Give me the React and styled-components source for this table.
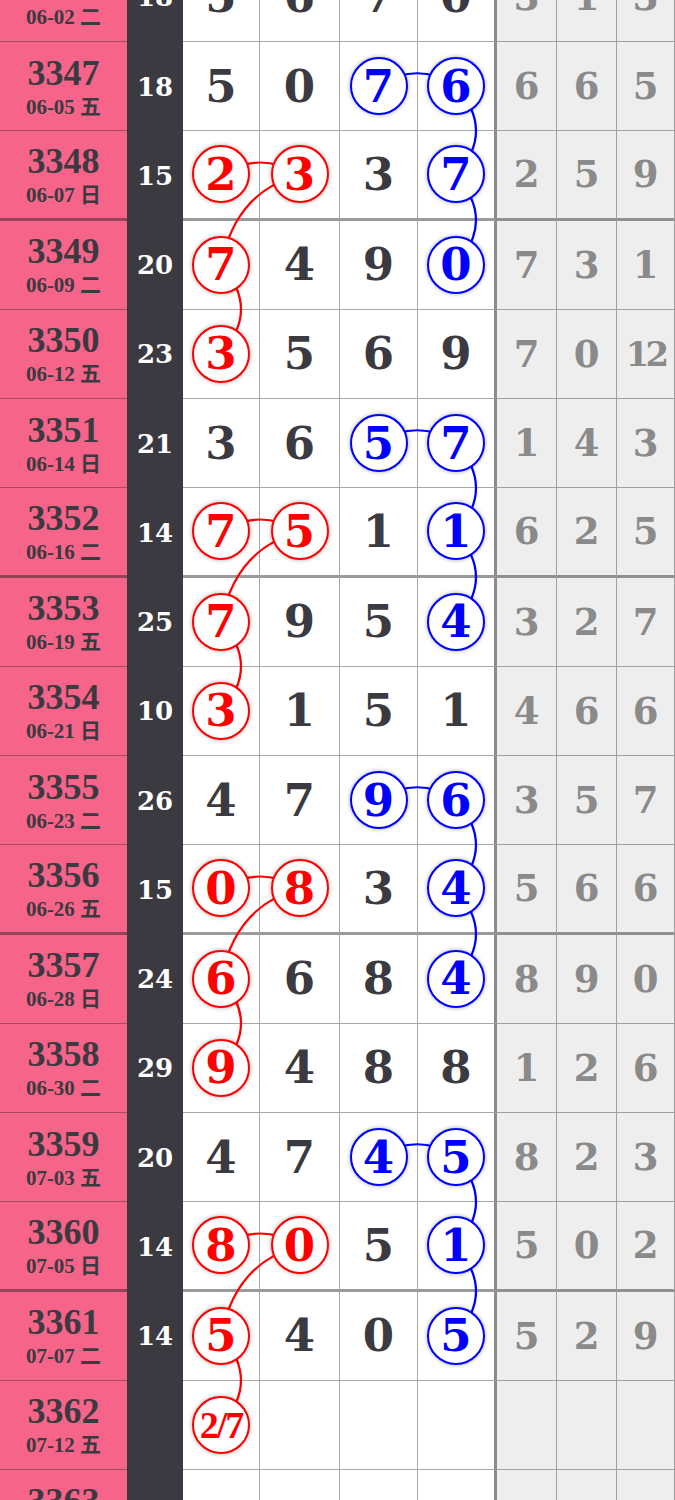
import React from 'react';
import styled, { createGlobalStyle } from 'styled-components';

const ROW_H = 89.25;
const WHITE_CX = [221, 299.5, 378.5, 456];

const GlobalStyle = createGlobalStyle`
  html, body {
    margin: 0;
    padding: 0;
    background: #ffffff;
  }
  body {
    font-family: "Liberation Serif", "Noto Sans CJK SC", serif;
    overflow: hidden;
  }
`;

const Page = styled.div`
  width: 675px;
  height: 1500px;
  overflow: hidden;
`;

const Table = styled.div`
  position: relative;
  width: 675px;
  margin-top: -47.25px;
`;

const Row = styled.div`
  display: grid;
  grid-template-columns: 127px 56px 77px 80px 78px 79px 60px 60px 58px;
  height: ${ROW_H}px;
`;

const IssueCell = styled.div`
  box-sizing: border-box;
  background: #f6648a;
  border-bottom: ${(p) => (p.$thick ? '3px solid rgba(70, 40, 50, 0.55)' : '1px solid rgba(70, 40, 50, 0.45)')};
  display: flex;
  flex-direction: column;
  align-items: center;
  justify-content: center;
  gap: 6px;
  color: #3b3a40;
  font-weight: bold;
`;

const IssueNo = styled.div`
  font-size: 36px;
  line-height: 1;
`;

const IssueDate = styled.div`
  font-size: 21px;
  line-height: 1;
`;

const SumCell = styled.div`
  background: #3a3a40;
  color: #ffffff;
  font-family: "DejaVu Serif", serif;
  font-size: 26px;
  font-weight: bold;
  display: flex;
  align-items: center;
  justify-content: center;
`;

const NumCell = styled.div`
  box-sizing: border-box;
  background: #ffffff;
  border-right: ${(p) => (p.$last ? '3px solid #8c8c8c' : '1px solid #a8a8a8')};
  border-bottom: ${(p) => (p.$thick ? '3px solid #9a9a9a' : '1px solid #a8a8a8')};
  display: flex;
  align-items: center;
  justify-content: center;
  color: #3b3a40;
  font-family: "DejaVu Serif", serif;
  font-size: 45px;
  font-weight: bold;
`;

const GrayCell = styled.div`
  box-sizing: border-box;
  background: #eeeeee;
  border-right: 1px solid #a0a0a0;
  border-bottom: ${(p) => (p.$thick ? '3px solid #909090' : '1px solid #a0a0a0')};
  display: flex;
  align-items: center;
  justify-content: center;
  color: #8a8a8a;
  font-family: "DejaVu Serif", serif;
  font-size: ${(p) => (p.$wide ? '34px' : '37px')};
  letter-spacing: ${(p) => (p.$wide ? '-4px' : '0')};
  font-weight: bold;
`;

const Ball = styled.span`
  position: relative;
  z-index: 2;
  box-sizing: border-box;
  width: 58px;
  height: 58px;
  border-radius: 50%;
  border: 2.6px solid ${(p) => p.$color};
  background: #ffffff;
  box-shadow: 0 0 4px rgba(0, 0, 0, 0.35);
  color: ${(p) => p.$color};
  display: flex;
  align-items: center;
  justify-content: center;
  font-family: ${(p) => (p.$small ? '"Liberation Serif", serif' : '"DejaVu Serif", serif')};
  font-size: ${(p) => (p.$small ? '38px' : '45px')};
  letter-spacing: ${(p) => (p.$small ? '-2px' : '0')};
  line-height: 1;
`;

const Links = styled.svg`
  position: absolute;
  left: 0;
  top: 0;
  z-index: 1;
  pointer-events: none;
`;

const COLORS = { r: '#ff0000', b: '#0000ff' };

const rows = [
  ['3346', '06-02 二', '18', ['5', '6', '7', '0'], ['3', '1', '3']],
  ['3347', '06-05 五', '18', ['5', '0', 'b7', 'b6'], ['6', '6', '5']],
  ['3348', '06-07 日', '15', ['r2', 'r3', '3', 'b7'], ['2', '5', '9']],
  ['3349', '06-09 二', '20', ['r7', '4', '9', 'b0'], ['7', '3', '1']],
  ['3350', '06-12 五', '23', ['r3', '5', '6', '9'], ['7', '0', '12']],
  ['3351', '06-14 日', '21', ['3', '6', 'b5', 'b7'], ['1', '4', '3']],
  ['3352', '06-16 二', '14', ['r7', 'r5', '1', 'b1'], ['6', '2', '5']],
  ['3353', '06-19 五', '25', ['r7', '9', '5', 'b4'], ['3', '2', '7']],
  ['3354', '06-21 日', '10', ['r3', '1', '5', '1'], ['4', '6', '6']],
  ['3355', '06-23 二', '26', ['4', '7', 'b9', 'b6'], ['3', '5', '7']],
  ['3356', '06-26 五', '15', ['r0', 'r8', '3', 'b4'], ['5', '6', '6']],
  ['3357', '06-28 日', '24', ['r6', '6', '8', 'b4'], ['8', '9', '0']],
  ['3358', '06-30 二', '29', ['r9', '4', '8', '8'], ['1', '2', '6']],
  ['3359', '07-03 五', '20', ['4', '7', 'b4', 'b5'], ['8', '2', '3']],
  ['3360', '07-05 日', '14', ['r8', 'r0', '5', 'b1'], ['5', '0', '2']],
  ['3361', '07-07 二', '14', ['r5', '4', '0', 'b5'], ['5', '2', '9']],
  ['3362', '07-12 五', '', ['r2/7', '', '', ''], ['', '', '']],
  ['3363', '07-14 日', '', ['', '', '', ''], ['', '', '']],
  ['3364', '07-17 二', '', ['', '', '', ''], ['', '', '']],
];

const cy = (r) => r * ROW_H + 44;

// 横向连线：同一行两个圈之间，略向上拱
const horiz = (r, c1, c2) => {
  const x1 = WHITE_CX[c1];
  const x2 = WHITE_CX[c2];
  const y = cy(r);
  return `M ${x1} ${y} Q ${(x1 + x2) / 2} ${y - 26} ${x2} ${y}`;
};

// 竖向连线：同一列相邻两行，向右拱
const vert = (r, c) => {
  const x = WHITE_CX[c];
  return `M ${x} ${cy(r)} Q ${x + 40} ${(cy(r) + cy(r + 1)) / 2} ${x} ${cy(r + 1)}`;
};

// 斜向连线：第二列落到下一行第一列
const diag = (r) => {
  const x1 = WHITE_CX[1];
  const x2 = WHITE_CX[0];
  return `M ${x1} ${cy(r)} Q ${x2 + 15} ${cy(r) + 15} ${x2} ${cy(r + 1)}`;
};

const links = [];
[1, 5, 9, 13].forEach((s) => {
  links.push({ d: horiz(s, 2, 3), c: 'b' });
  links.push({ d: vert(s, 3), c: 'b' });
  links.push({ d: vert(s + 1, 3), c: 'b' });
});
[2, 6, 10, 14].forEach((s) => {
  links.push({ d: horiz(s, 0, 1), c: 'r' });
  links.push({ d: diag(s), c: 'r' });
  links.push({ d: vert(s + 1, 0), c: 'r' });
});

const Num = ({ value }) => {
  if (!value) return null;
  const tone = value[0];
  if (tone === 'r' || tone === 'b') {
    const text = value.slice(1);
    return (
      <Ball $color={COLORS[tone]} $small={text.length > 1}>
        {text}
      </Ball>
    );
  }
  return value;
};

const App = () => {
  const height = rows.length * ROW_H;
  return (
    <Page>
      <GlobalStyle />
      <Table>
        {rows.map(([issue, date, sum, nums, grays]) => {
          const thick = (Number(issue) - 3344) % 4 === 0;
          return (
            <Row key={issue}>
              <IssueCell $thick={thick}>
                <IssueNo>{issue}</IssueNo>
                <IssueDate>{date}</IssueDate>
              </IssueCell>
              <SumCell>{sum}</SumCell>
              {nums.map((n, i) => (
                <NumCell key={i} $thick={thick} $last={i === 3}>
                  <Num value={n} />
                </NumCell>
              ))}
              {grays.map((g, i) => (
                <GrayCell key={i} $thick={thick} $wide={g.length > 1}>
                  {g}
                </GrayCell>
              ))}
            </Row>
          );
        })}
        <Links width="675" height={height} viewBox={`0 0 675 ${height}`}>
          {links.map((l, i) => (
            <path key={i} d={l.d} fill="none" stroke={COLORS[l.c]} strokeWidth="2.2" />
          ))}
        </Links>
      </Table>
    </Page>
  );
};

export default App;
